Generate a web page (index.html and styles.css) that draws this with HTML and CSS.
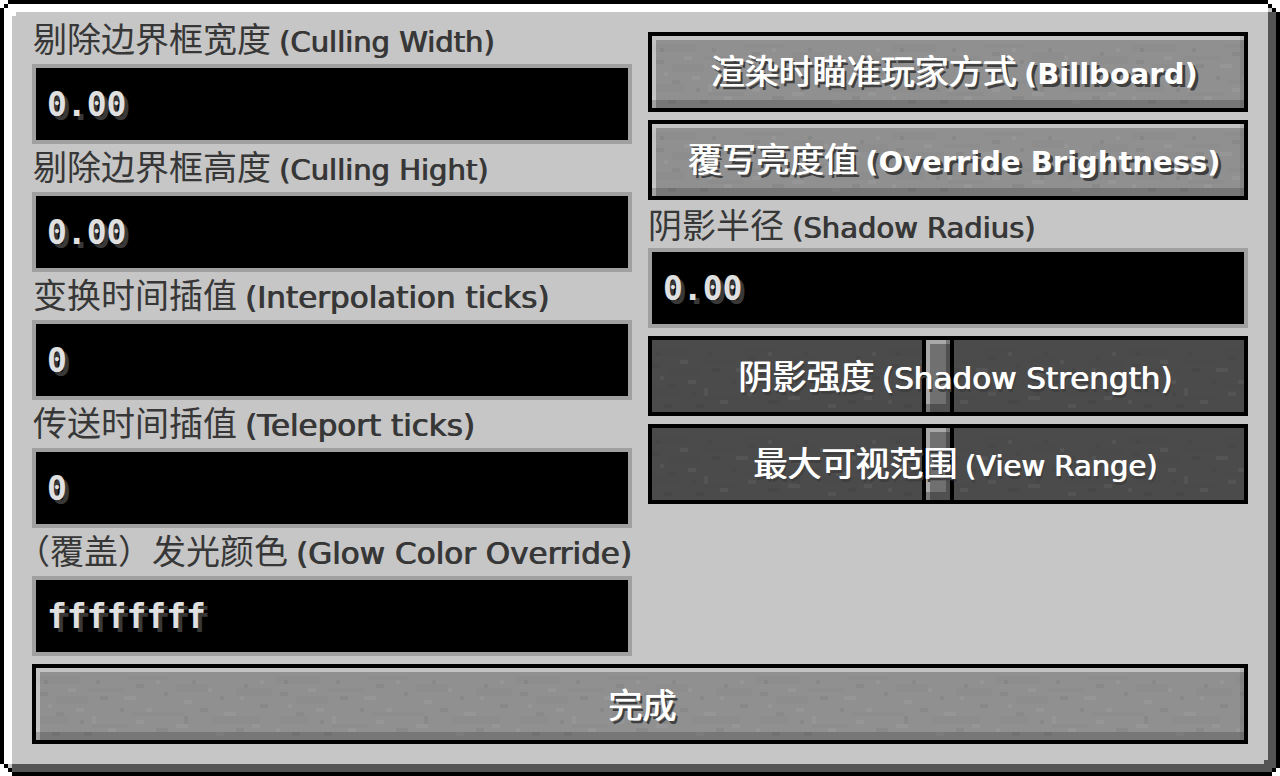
FILE: index.html
```html
<!DOCTYPE html>
<html lang="zh-CN">
<head>
<meta charset="utf-8">
<meta name="viewport" content="width=device-width, initial-scale=1">
<title>Display settings</title>
<link rel="stylesheet" href="styles.css">
</head>
<body>
<form class="panel">
  <svg class="corner top left" viewBox="0 0 4 4" aria-hidden="true"><path fill="#fff" d="M0 0h4v4H0z"/><path d="M2 0h2v1H2zM1 1h1v1H1zM0 2h1v2H0z"/></svg>
  <svg class="corner top right" viewBox="0 0 4 4" aria-hidden="true"><path fill="#fff" d="M0 0h4v3H0z"/><path fill="#c6c6c6" d="M1 2h1v1H1zM0 3h1v1H0z"/><path fill="#555" d="M1 3h2v1H1z"/><path d="M0 0h1v1H0zM1 1h1v1H1zM2 2h1v1H2zM3 3h1v1H3z"/></svg>
  <svg class="corner bottom left" viewBox="0 0 4 4" aria-hidden="true"><path fill="#fff" d="M0 0h3v4H0z"/><path fill="#c6c6c6" d="M2 1h1v1H2zM3 0h1v1H3z"/><path fill="#555" d="M3 1h1v2H3z"/><path d="M0 0h1v1H0zM1 1h1v1H1zM2 2h1v1H2zM3 3h1v1H3z"/></svg>
  <svg class="corner bottom right" viewBox="0 0 4 4" aria-hidden="true"><path fill="#fff" d="M0 0h4v4H0z"/><path fill="#555" d="M0 0h3v2H0zM0 2h2v1H0z"/><path d="M3 0h1v2H3zM2 2h1v1H2zM0 3h2v1H0z"/></svg>

  <div class="columns">
    <div class="column">
      <div class="field">
        <label class="caption" for="width">剔除边界框宽度 <span class="latin">(Culling Width)</span></label>
        <input class="box" id="width" type="text" value="0.00">
      </div>
      <div class="field">
        <label class="caption" for="height">剔除边界框高度 <span class="latin">(Culling Hight)</span></label>
        <input class="box" id="height" type="text" value="0.00">
      </div>
      <div class="field">
        <label class="caption" for="interpolation">变换时间插值 <span class="latin large">(Interpolation ticks)</span></label>
        <input class="box" id="interpolation" type="text" value="0">
      </div>
      <div class="field">
        <label class="caption" for="teleport">传送时间插值 <span class="latin large">(Teleport ticks)</span></label>
        <input class="box" id="teleport" type="text" value="0">
      </div>
      <div class="field">
        <label class="caption" for="glow"><span class="half">（</span>覆盖）发光颜色 <span class="latin large">(Glow Color Override)</span></label>
        <input class="box" id="glow" type="text" value="ffffffff">
      </div>
    </div>

    <div class="column options">
      <button class="button" type="button">渲染时瞄准玩家方式 <span class="latin">(Billboard)</span></button>
      <button class="button" type="button">覆写亮度值 <span class="latin">(Override Brightness)</span></button>
      <div class="field radius">
        <label class="caption" for="radius">阴影半径 <span class="latin">(Shadow Radius)</span></label>
        <input class="box" id="radius" type="text" value="0.00">
      </div>
      <div class="slider">
        <input class="range" id="strength" type="range" min="0" max="1000" value="482">
        <label class="range-text" for="strength">阴影强度 <span class="latin large">(Shadow Strength)</span></label>
      </div>
      <div class="slider">
        <input class="range" id="view" type="range" min="0" max="1000" value="482">
        <label class="range-text" for="view">最大可视范围 <span class="latin">(View Range)</span></label>
      </div>
    </div>
  </div>
  <button class="button done" type="button">完成</button>
</form>
</body>
</html>
```

FILE: styles.css
```css
:root {
  --stone: url("data:image/svg+xml,%3Csvg xmlns='http://www.w3.org/2000/svg' width='240' height='72' shape-rendering='crispEdges'%3E%3Cpath fill='%23fff' fill-opacity='.05' d='M12 36h4v4h-4zM32 20h8v4H32zM56 48h4v8h-4zM72 60h8v4H72zM88 28h12v4H88zM110 40h6v4h-6zM120 12h4v4h-4zM140 56h12v4h-12zM148 32h8v4h-8zM172 20h4v4h-4zM188 44h12v4h-12zM204 28h4v4h-4zM216 56h8v4h-8zM224 12h4v4h-4zM40 40h8v4H40zM0 60h4v4H0zM100 52h8v4h-8zM180 64h8v4h-8z'/%3E%3Cpath fill='%23000' fill-opacity='.05' d='M8 12h4v4H8zM20 44h8v4h-8zM44 52h4v4h-4zM60 12h4v4h-4zM64 28h8v4H64zM84 40h4v4H84zM100 16h8v4h-8zM128 24h4v4h-4zM120 60h12v4h-12zM156 12h4v4h-4zM164 40h8v4h-8zM184 28h4v4h-4zM200 60h8v4h-8zM208 16h4v4h-4zM224 36h8v4h-8zM16 64h8v4H16zM148 48h4v8h-4zM48 64h8v4H48zM4 24h8v4H4z'/%3E%3Cpath fill='%23000' fill-opacity='.02' d='M0 8h44v8H0zM52 20h36v4H52zM20 28h32v8H20zM92 8h40v4H92zM96 44h52v4H96zM140 16h32v8h-32zM176 48h48v8h-48zM56 56h36v4H56zM4 48h28v8H4zM200 20h36v8h-36z'/%3E%3C/svg%3E");
}

* {
  box-sizing: border-box;
}

body {
  margin: 0;
  background: #fff;
  color: #373737;
  font-family: "Noto Sans CJK SC", sans-serif;
  font-size: 34px;
  line-height: 48px;
}

.panel {
  position: relative;
  display: flex;
  flex-direction: column;
  gap: 8px;
  min-height: 100vh;
  padding: 12px 28px 28px;
  border: 4px solid #000;
  background: #c6c6c6;
  box-shadow: inset 8px 8px #fff, inset -8px -8px #555;
}

.corner {
  position: absolute;
  width: 16px;
  height: 16px;
  shape-rendering: crispEdges;
}

.top { top: -4px; }
.bottom { bottom: -4px; }
.left { left: -4px; }
.right { right: -4px; }

.columns {
  display: grid;
  grid-template-columns: 1fr 1fr;
  gap: 16px;
}

.column {
  display: flex;
  flex-direction: column;
  min-width: 0;
}

.options {
  gap: 8px;
  padding-top: 16px;
}

.field {
  display: flex;
  flex-direction: column;
}

.caption {
  height: 48px;
  padding-left: 1px;
  line-height: 44px;
  white-space: nowrap;
}

.radius {
  margin-top: -8px;
}

.radius .caption {
  padding-left: 0;
  line-height: 48px;
}

.latin {
  font-family: "DejaVu Sans", sans-serif;
  font-size: 29px;
}

.large {
  font-size: 31px;
}

.caption .latin {
  text-shadow: 1px 0 #373737;
}

.button .latin {
  font-weight: bold;
}

.half {
  font-feature-settings: "halt";
}

.box {
  width: 100%;
  height: 80px;
  padding: 0 11px;
  border: 4px solid #a0a0a0;
  border-radius: 0;
  outline: none;
  background: #000;
  color: #e0e0e0;
  font: bold 33px "DejaVu Sans Mono", monospace;
  text-shadow: 4px 4px #383838;
}

.button {
  height: 80px;
  padding: 0 0 0 12px;
  border: 4px solid #000;
  border-radius: 0;
  background: #909090 var(--stone);
  box-shadow: inset -4px 0 rgba(0, 0, 0, .08), inset 0 -8px rgba(0, 0, 0, .17), inset 4px 4px rgba(255, 255, 255, .45);
  color: #fff;
  font: inherit;
  text-shadow: 1px 0 #fff, 3px 3px #3f3f3f;
  white-space: nowrap;
}

.button .latin {
  text-shadow: 3px 3px #3f3f3f;
}

.done {
  padding-left: 4px;
}

.slider {
  display: grid;
}

.range,
.range-text {
  grid-area: 1 / 1;
}

.range {
  appearance: none;
  width: 100%;
  height: 80px;
  margin: 0;
  border: solid #000;
  border-width: 4px 0;
  background: #4b4b4b var(--stone);
  box-shadow: inset 4px 0 #000, inset -4px 0 #000;
}

.range::-webkit-slider-thumb {
  appearance: none;
  width: 32px;
  height: 72px;
  border: solid #000;
  border-width: 0 4px;
  border-radius: 0;
  background: #707070;
  box-shadow: inset -4px -8px rgba(0, 0, 0, .28), inset 4px 4px #a8a8a8;
}

.range-text {
  z-index: 1;
  align-self: center;
  padding-left: 14px;
  color: #fff;
  text-align: center;
  text-shadow: 1px 0 #fff, 2px 3px #3f3f3f;
  white-space: nowrap;
  pointer-events: none;
}
```
